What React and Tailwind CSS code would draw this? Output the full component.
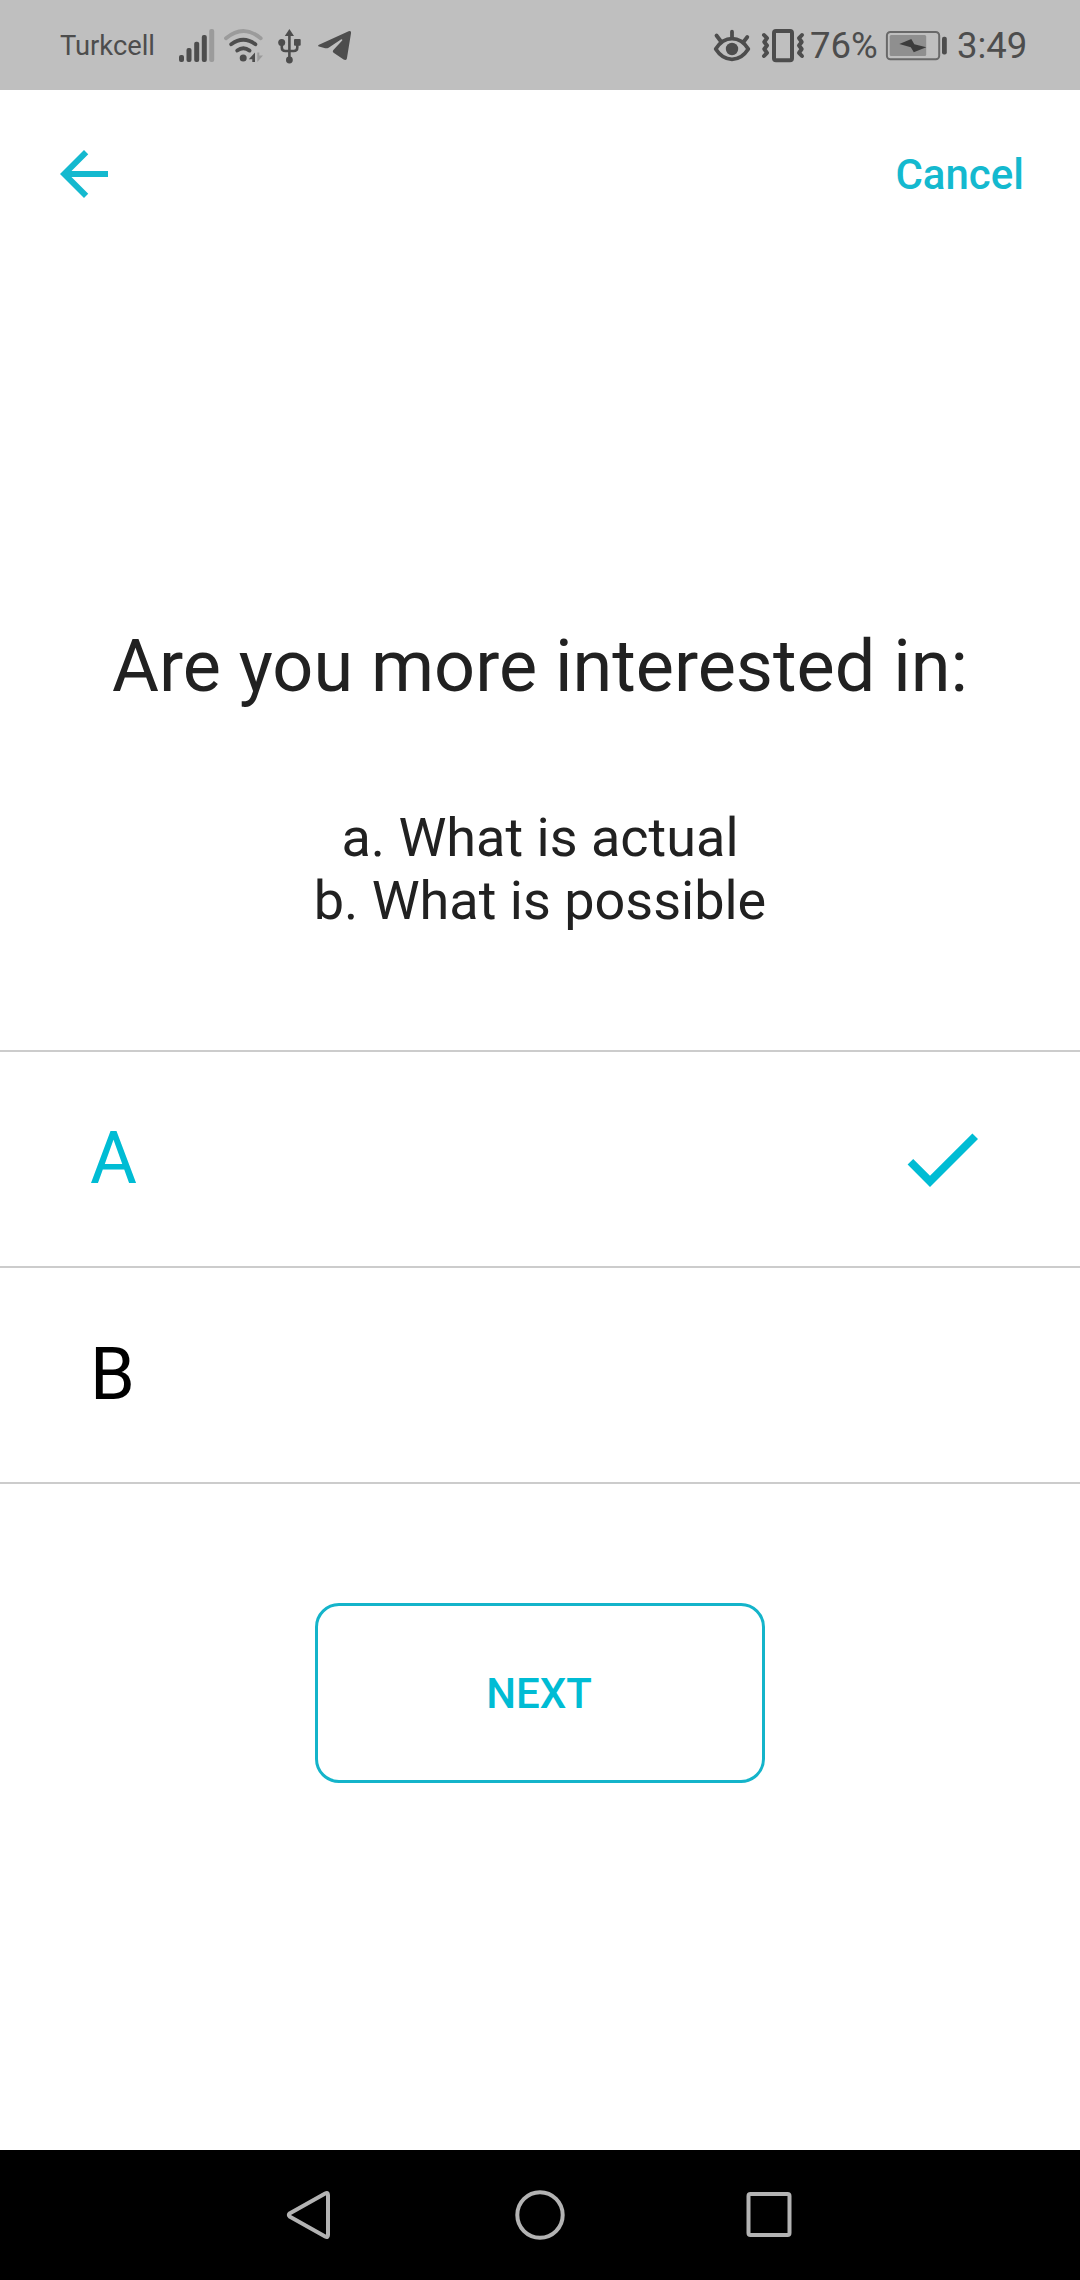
import React from "react";

const INK = "#4d4d4d";

function SignalIcon() {
  return (
    <svg className="ml-[25px]" width="36" height="34" viewBox="0 0 36 34" fill={INK}>
      <rect x="0" y="26" width="5" height="7" rx="2" />
      <rect x="7.5" y="19" width="5" height="14" rx="2" />
      <rect x="15.2" y="12.7" width="5" height="20.3" rx="2" />
      <rect x="22.8" y="6" width="5" height="27" rx="2" />
      <rect x="30.2" y="0" width="5" height="33" rx="2" fill="#9b9b9b" />
    </svg>
  );
}

function WifiIcon() {
  return (
    <svg className="ml-[7px]" width="42" height="34" viewBox="222 28 42 34" fill="none" strokeLinecap="round" strokeWidth="3.8">
      <path d="M226 37.3Q243.3 22.7 260.7 37.3" stroke="#9b9b9b" />
      <path d="M231.2 43.3Q243.3 34.3 255.4 43.3" stroke={INK} />
      <path d="M237.2 49.6Q243.3 45 249.6 49.6" stroke={INK} />
      <circle cx="243.2" cy="57" r="3.5" fill={INK} />
      <path d="M248.8 58.3L255 51.5V61H252.3V58.3Z" fill={INK} />
      <path d="M257.3 51.5H259.3V54.6H263L257.3 61Z" fill="#9b9b9b" />
    </svg>
  );
}

function UsbIcon() {
  return (
    <svg className="ml-[13px]" width="25" height="36" viewBox="277 27 25 36" fill={INK}>
      <path d="M289.4 28L294 35H284.8Z" />
      <path d="M289.4 33V58M281.8 42V46.5Q281.8 50 285.3 50H293.7Q297.3 50 297.3 46.5V42" fill="none" stroke={INK} strokeWidth="2.6" />
      <circle cx="281.7" cy="41.5" r="3.5" />
      <rect x="294" y="38" width="6.7" height="6.7" rx="1" />
      <circle cx="289.4" cy="59" r="3.4" />
    </svg>
  );
}

function TelegramIcon() {
  return (
    <svg className="ml-4" width="33" height="32" viewBox="318 31 33 32" fill={INK}>
      <path d="M319 45.7L348.6 32.3Q351.3 31.4 351 34.3L346.9 59.4Q346.1 62 343.6 60.6L333.6 53.7Q332.1 52.4 333.4 51L342.2 41.5Q342.7 39.9 340.9 40.5L328.6 48.7Q327 49.6 325.2 49.2L319 47.6Q317.2 46.7 319 45.7Z" />
    </svg>
  );
}

function EyeIcon() {
  return (
    <svg width="38" height="34" viewBox="713 29 38 34" fill="none" stroke={INK} strokeWidth="3.8" strokeLinecap="round" strokeLinejoin="round">
      <path d="M715.7 49Q722.3 38.7 732 38.7T748.3 49Q741.7 59.3 732 59.3T715.7 49Z" />
      <path d="M732 31.7V38M716.5 35.5L721 41.5M747.3 37L743.5 42" />
      <circle cx="732" cy="49" r="6.2" fill={INK} stroke="none" />
    </svg>
  );
}

function VibrateIcon() {
  return (
    <svg className="ml-[10px]" width="44" height="34" viewBox="761 29 44 34" fill="none" stroke={INK} strokeWidth="4" strokeLinecap="round" strokeLinejoin="round">
      <rect x="774" y="31" width="18" height="29.2" rx="2" />
      <path d="M764 35L767 38.2L764.3 42L767 45.5L764.3 49L767 52.8L764 56" />
      <path d="M802 35L799 38.2L801.7 42L799 45.5L801.7 49L799 52.8L802 56" />
    </svg>
  );
}

function BatteryIcon() {
  return (
    <svg className="ml-[8px]" width="62" height="30" viewBox="885 31 62 30">
      <rect x="886.9" y="32" width="52.3" height="27.2" rx="3.5" fill="none" stroke="#696969" strokeWidth="2" />
      <rect x="889.7" y="35" width="36.5" height="21" rx="1.5" fill="#8f8f8f" />
      <path d="M899.3 44L911.3 39L914.3 44.2L926.3 47.3L913.8 52.2L910.8 47.2Z" fill="#3c3c3c" />
      <rect x="942" y="36.8" width="4.8" height="17.6" rx="2" fill={INK} />
    </svg>
  );
}

function StatusBar() {
  return (
    <header className="flex h-[90px] shrink-0 items-center justify-between bg-[#bfbfbf] pl-[60px] pr-[53px] pt-[2px] text-[#4d4d4d]">
      <div className="flex items-center">
        <span className="w-[94px] whitespace-nowrap text-[27.3px] leading-[34px]">Turkcell</span>
        <SignalIcon />
        <WifiIcon />
        <UsbIcon />
        <TelegramIcon />
      </div>
      <div className="flex items-center text-[36.5px] leading-[44px]">
        <EyeIcon />
        <VibrateIcon />
        <span className="ml-[5px] w-[67px] whitespace-nowrap">76%</span>
        <BatteryIcon />
        <span className="ml-[10px] w-[70px] whitespace-nowrap">3:49</span>
      </div>
    </header>
  );
}

function Option({ label, selected }) {
  return (
    <li className="flex h-[216px] items-center justify-between border-b-2 border-[#cccccc] pl-[90px] pr-[90px]">
      <span className={selected ? "text-[72px] leading-[84px] text-[#00bcd4]" : "text-[72px] leading-[84px] text-black"}>{label}</span>
      {selected && (
        <svg width="96" height="96" viewBox="0 0 24 24" fill="#00bcd4">
          <path d="M9 16.2L4.8 12l-1.4 1.4L9 19 21 7l-1.4-1.4L9 16.2z" />
        </svg>
      )}
    </li>
  );
}

function NavBar() {
  return (
    <nav className="flex h-[130px] shrink-0 items-center justify-center gap-[178px] bg-black">
      <svg width="52" height="52" viewBox="0 0 52 52" fill="none" stroke="#b3b3b3" strokeWidth="4" strokeLinejoin="round">
        <path d="M41.2 4.5Q44 3 44 6V46Q44 49 41.2 47.5L6 27.8Q3.6 26 6 24.2Z" />
      </svg>
      <svg width="52" height="52" viewBox="0 0 52 52" fill="none" stroke="#b3b3b3" strokeWidth="4">
        <circle cx="26" cy="26" r="22.7" />
      </svg>
      <svg width="52" height="52" viewBox="0 0 52 52" fill="none" stroke="#b3b3b3" strokeWidth="4">
        <rect x="4.5" y="5" width="41" height="41" rx="2" />
      </svg>
    </nav>
  );
}

export default function App() {
  return (
    <div className="flex h-[2280px] w-[1080px] flex-col bg-white font-['Roboto',sans-serif]">
      <StatusBar />
      <div className="flex h-[168px] shrink-0 items-center justify-between pl-[48px] pr-[56px] text-[#14b9cf]">
        <button aria-label="Back">
          <svg width="72" height="72" viewBox="0 0 24 24" fill="currentColor">
            <path d="M20 11H7.83l5.59-5.59L12 4l-8 8 8 8 1.41-1.41L7.83 13H20v-2z" />
          </svg>
        </button>
        <button className="pt-[2px] text-[42px] font-medium leading-[50px]">Cancel</button>
      </div>
      <main className="flex grow flex-col items-center pt-[367px] text-[#212121]">
        <h1 className="whitespace-nowrap text-[72px] leading-[84px]">Are you more interested in:</h1>
        <p className="mt-[97px] text-center text-[54px] leading-[63px]">
          a. What is actual
          <br />
          b. What is possible
        </p>
        <ul className="mt-[118px] w-full border-t-2 border-[#cccccc]">
          <Option label="A" selected />
          <Option label="B" />
        </ul>
        <button className="mt-[119px] h-[180px] w-[450px] rounded-[24px] border-3 border-[#14b4ca] pr-[2px] pt-[2px] text-[42px] font-medium leading-[50px] text-[#00bcd4]">
          NEXT
        </button>
      </main>
      <NavBar />
    </div>
  );
}
